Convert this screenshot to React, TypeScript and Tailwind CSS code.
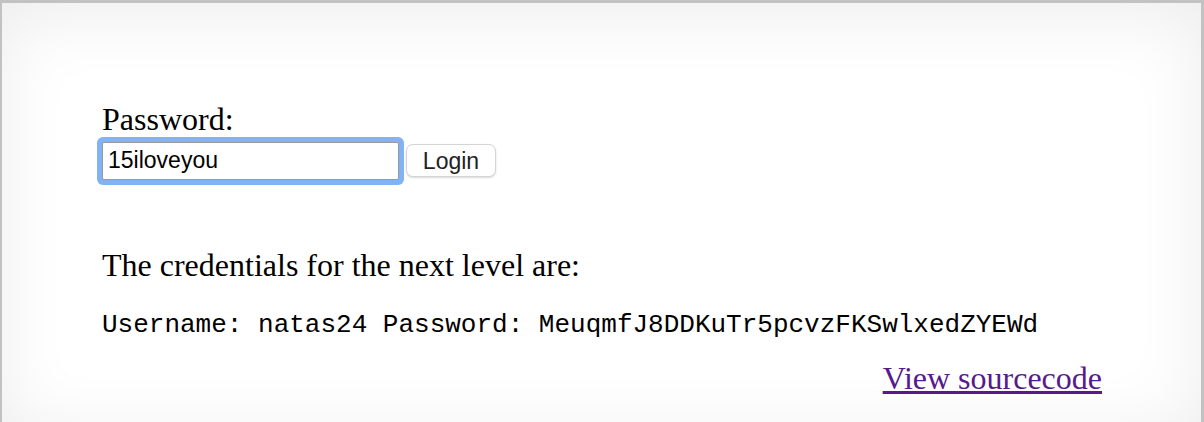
import React from "react";

export default function App() {
  const serif = { fontFamily: '"Liberation Serif", "Times New Roman", serif' };
  return (
    <div className="w-[1204px] h-[422px] bg-[#c2c2c2] pt-[3px] pl-[2px] pr-[3px] overflow-hidden">
      <div
        className="h-full bg-white shadow-[inset_0_12px_70px_rgba(0,0,0,0.075)] pl-[100px] pr-[99px] pt-[98px] text-black"
        style={serif}
      >
        <div className="text-[32px] leading-[36.8px]">Password:</div>
        <div className="flex items-center mt-[4px]">
          <input
            readOnly
            value="15iloveyou"
            className="w-[297px] h-[38px] border border-[#9a9a9a] bg-white rounded-[2px] px-[5px] text-[23px] text-black shadow-[0_0_0_5px_#80b2f4] outline-none"
            style={{ fontFamily: '"Liberation Sans", Arial, sans-serif' }}
          />
          <button
            className="ml-[7px] w-[90px] h-[33px] rounded-[7px] border border-[#d4d4d4] bg-white text-[23px] text-[#222] shadow-[0_1px_2px_rgba(0,0,0,0.15)] flex items-center justify-center"
            style={{ fontFamily: '"Liberation Sans", Arial, sans-serif' }}
          >
            Login
          </button>
        </div>
        <div className="text-[32px] leading-[36.8px] mt-[67px]">
          The credentials for the next level are:
        </div>
        <pre
          className="text-[26px] leading-[29.5px] mt-[27px] m-0"
          style={{ fontFamily: '"Liberation Mono", "Courier New", monospace' }}
        >
          Username: natas24 Password: MeuqmfJ8DDKuTr5pcvzFKSwlxedZYEWd
        </pre>
        <div className="flex justify-end mt-[20px]">
          <a href="#" className="text-[32px] leading-[36.8px] text-[#551a8b] underline">
            View sourcecode
          </a>
        </div>
      </div>
    </div>
  );
}
